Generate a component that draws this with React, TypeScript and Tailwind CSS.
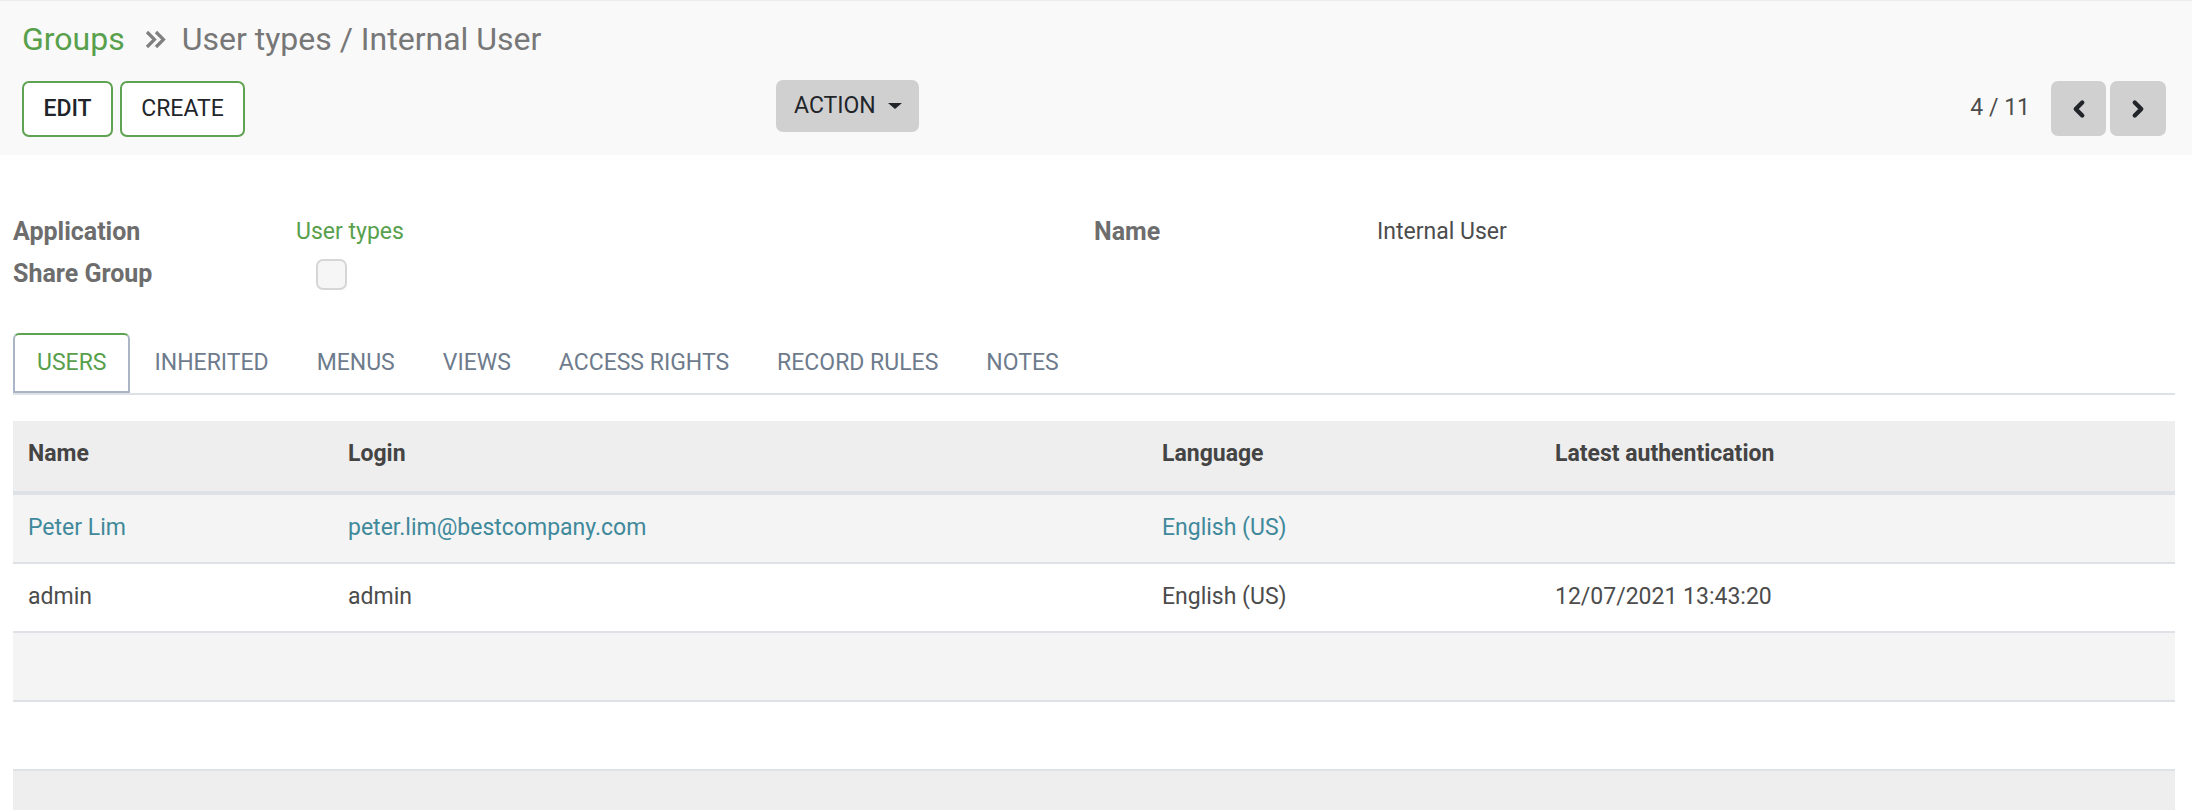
import { ChevronLeft, ChevronRight } from "lucide-react";

const tabs = ["USERS", "INHERITED", "MENUS", "VIEWS", "ACCESS RIGHTS", "RECORD RULES", "NOTES"];

const rows = [
  { name: "Peter Lim", login: "peter.lim@bestcompany.com", lang: "English (US)", auth: "", link: true },
  { name: "admin", login: "admin", lang: "English (US)", auth: "12/07/2021 13:43:20", link: false },
  { name: "", login: "", lang: "", auth: "", link: false },
  { name: "", login: "", lang: "", auth: "", link: false },
];

function DoubleAngle() {
  return (
    <svg width="21" height="19" viewBox="0 0 21 19" className="ml-[20px] mr-[16px] shrink-0">
      <path d="M2 2 L9.5 9.5 L2 17" fill="none" stroke="#808080" strokeWidth="3.2" />
      <path d="M11 2 L18.5 9.5 L11 17" fill="none" stroke="#808080" strokeWidth="3.2" />
    </svg>
  );
}

export default function App() {
  return (
    <div className="min-h-[810px] bg-white font-[family-name:Roboto,sans-serif] text-[#4c4c4c]">
      {/* control panel */}
      <div className="bg-[#f9f9f9] border-t border-[#ececec] pl-[22px] pr-[26px] pt-[17px] pb-[18px]">
        <div className="flex items-center h-[42px] text-[32px] leading-[42px]">
          <span className="text-[#58a04c]">Groups</span>
          <DoubleAngle />
          <span className="text-[#777777]">User types / Internal User</span>
        </div>
        <div className="mt-[21px] flex items-start">
          <div className="flex gap-[7px]">
            <button className="h-[56px] w-[91px] rounded-[7px] border-2 border-[#5fa352] bg-white text-[23px] font-medium text-[#212529]">
              EDIT
            </button>
            <button className="h-[56px] w-[125px] rounded-[7px] border-2 border-[#5fa352] bg-white text-[23px] text-[#212529]">
              CREATE
            </button>
          </div>
          <button className="ml-[531px] -mt-[1px] h-[52px] w-[143px] rounded-[7px] bg-[#d1d0d1] pl-[18px] flex items-center text-[23px] text-[#212529]">
            ACTION
            <span className="ml-[12px] w-0 h-0 border-l-[7px] border-r-[7px] border-t-[6px] border-l-transparent border-r-transparent border-t-[#212529]" />
          </button>
          <div className="ml-auto flex items-center">
            <span className="text-[23px] text-[#4c4c4c]">4 / 11</span>
            <div className="ml-[21px] flex gap-[4px]">
              <button className="h-[55px] w-[55px] rounded-[7px] bg-[#d1d0d1] flex items-center justify-center">
                <ChevronLeft size={26} strokeWidth={4} color="#212529" />
              </button>
              <button className="h-[55px] w-[56px] rounded-[7px] bg-[#d1d0d1] flex items-center justify-center">
                <ChevronRight size={26} strokeWidth={4} color="#212529" />
              </button>
            </div>
          </div>
        </div>
      </div>

      {/* form */}
      <div className="pl-[13px] pr-[17px] pt-[56px]">
        <div className="grid grid-cols-2 text-[23px]">
          <div className="grid grid-cols-[283px_1fr] auto-rows-[42px] items-center">
            <span className="text-[25px] font-bold text-[#6d6d6d]">Application</span>
            <span className="text-[#58a04c]">User types</span>
            <span className="text-[25px] font-bold text-[#6d6d6d]">Share Group</span>
            <span className="ml-[20px] h-[31px] w-[31px] rounded-[7px] border-2 border-[#d6d6d6] bg-[#f6f6f6]" />
          </div>
          <div className="grid grid-cols-[283px_1fr] auto-rows-[42px] items-center">
            <span className="text-[25px] font-bold text-[#6d6d6d]">Name</span>
            <span className="text-[#4c4c4c]">Internal User</span>
          </div>
        </div>

        {/* tabs */}
        <div className="mt-[38px] flex border-b-2 border-[#dee2e6] text-[23px]">
          {tabs.map((t, i) => (
            <div
              key={t}
              className={
                i === 0
                  ? "h-[60px] px-[22px] flex items-center rounded-t-[6px] border-2 border-[#aab6c5] border-t-[#5fa352] text-[#58a04c]"
                  : "h-[60px] px-[22px] flex items-center border-2 border-transparent text-[#6e7b8c]"
              }
            >
              {t}
            </div>
          ))}
        </div>

        {/* table */}
        <div className="mt-[26px] text-[23px]">
          <div className="grid grid-cols-[320px_814px_393px_1fr] h-[74px] pb-[4px] items-center bg-[#eeeeee] border-b-4 border-[#dee2e6] font-bold text-[#444444]">
            <span className="px-[15px]">Name</span>
            <span className="px-[15px]">Login</span>
            <span className="px-[15px]">Language</span>
            <span className="px-[15px]">Latest authentication</span>
          </div>
          {rows.map((r, i) => (
            <div
              key={i}
              className={`grid grid-cols-[320px_814px_393px_1fr] h-[69px] items-center border-b-2 border-[#dee2e6] ${
                i % 2 === 0 ? "bg-[#f4f4f4]" : "bg-white"
              } ${r.link ? "text-[#40899b]" : "text-[#4c4c4c]"}`}
            >
              <span className="px-[15px]">{r.name}</span>
              <span className="px-[15px]">{r.login}</span>
              <span className="px-[15px]">{r.lang}</span>
              <span className="px-[15px] text-[#4c4c4c]">{r.auth}</span>
            </div>
          ))}
          <div className="h-[40px] bg-[#eeeeee]" />
        </div>
      </div>
    </div>
  );
}
